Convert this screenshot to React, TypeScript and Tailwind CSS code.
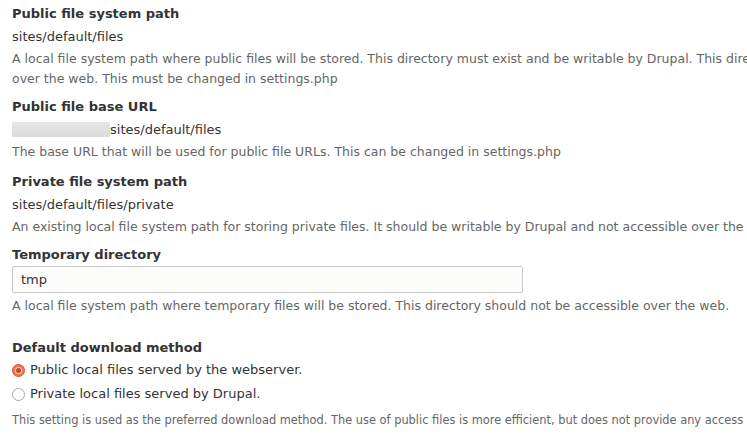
import React from "react";

const font = { fontFamily: '"DejaVu Sans", sans-serif' };

function Title({ children }: { children: React.ReactNode }) {
  return <div className="text-[13px] font-bold leading-[22px] h-[22px] text-[#333] whitespace-nowrap">{children}</div>;
}
function Value({ children }: { children: React.ReactNode }) {
  return <div className="text-[13px] leading-[22px] h-[22px] text-[#333] whitespace-nowrap pt-[1px]">{children}</div>;
}
function Desc({ children, className = "" }: { children: React.ReactNode; className?: string }) {
  return <div className={"text-[12.5px] leading-[20px] text-[#666] whitespace-nowrap " + className}>{children}</div>;
}

export default function App() {
  return (
    <div style={font} className="w-[747px] h-[435px] overflow-hidden bg-white pl-[12px] pt-[3px]">
      <div className="w-[1000px]">
        <Title>Public file system path</Title>
        <Value>sites/default/files</Value>
        <Desc className="mt-[2px]">
          A local file system path where public files will be stored. This directory must exist and be writable by Drupal. This directory should not be accessible
          <br />
          over the web. This must be changed in settings.php
        </Desc>

        <div className="mt-[7px]">
          <Title>Public file base URL</Title>
          <Value>
            <span className="inline-block align-middle w-[98px] h-[15px] -mt-[3px] bg-gradient-to-b from-[#e6e6e6] to-[#dcdcdc] rounded-[1px] blur-[0.6px]" />
            sites/default/files
          </Value>
          <Desc className="mt-[2px]">The base URL that will be used for public file URLs. This can be changed in settings.php</Desc>
        </div>

        <div className="mt-[9px]">
          <Title>Private file system path</Title>
          <Value>sites/default/files/private</Value>
          <Desc className="mt-[2px]">An existing local file system path for storing private files. It should be writable by Drupal and not accessible over the web.</Desc>
        </div>

        <div className="mt-[7px]">
          <Title>Temporary directory</Title>
          <div className="w-[511px] h-[27px] border border-[#c8c8c8] bg-[#fcfcfa] rounded-[2px] flex items-center pl-[8px] text-[13px] text-[#333]">
            tmp
          </div>
          <Desc className="mt-[3px]">A local file system path where temporary files will be stored. This directory should not be accessible over the web.</Desc>
        </div>

        <div className="mt-[21px]">
          <Title>Default download method</Title>
          <div className="flex items-center h-[22px] text-[13px] text-[#333] whitespace-nowrap">
            <span className="w-[13px] h-[13px] rounded-full bg-[#ee7a52] border border-[#d9532b] flex items-center justify-center mr-[5px]">
              <span className="w-[7px] h-[7px] rounded-full bg-[#fbd3c4] flex items-center justify-center">
                <span className="w-[5px] h-[5px] rounded-full bg-[#d2421d]" />
              </span>
            </span>
            Public local files served by the webserver.
          </div>
          <div className="flex items-center h-[22px] mt-[2px] text-[13px] text-[#333] whitespace-nowrap">
            <span className="w-[13px] h-[13px] rounded-full bg-white border border-[#a8a8a8] mr-[5px]" />
            Private local files served by Drupal.
          </div>
          <div className="mt-[6px] text-[11.4px] leading-[18px] text-[#666] whitespace-nowrap">
            This setting is used as the preferred download method. The use of public files is more efficient, but does not provide any access control.
          </div>
        </div>
      </div>
    </div>
  );
}
